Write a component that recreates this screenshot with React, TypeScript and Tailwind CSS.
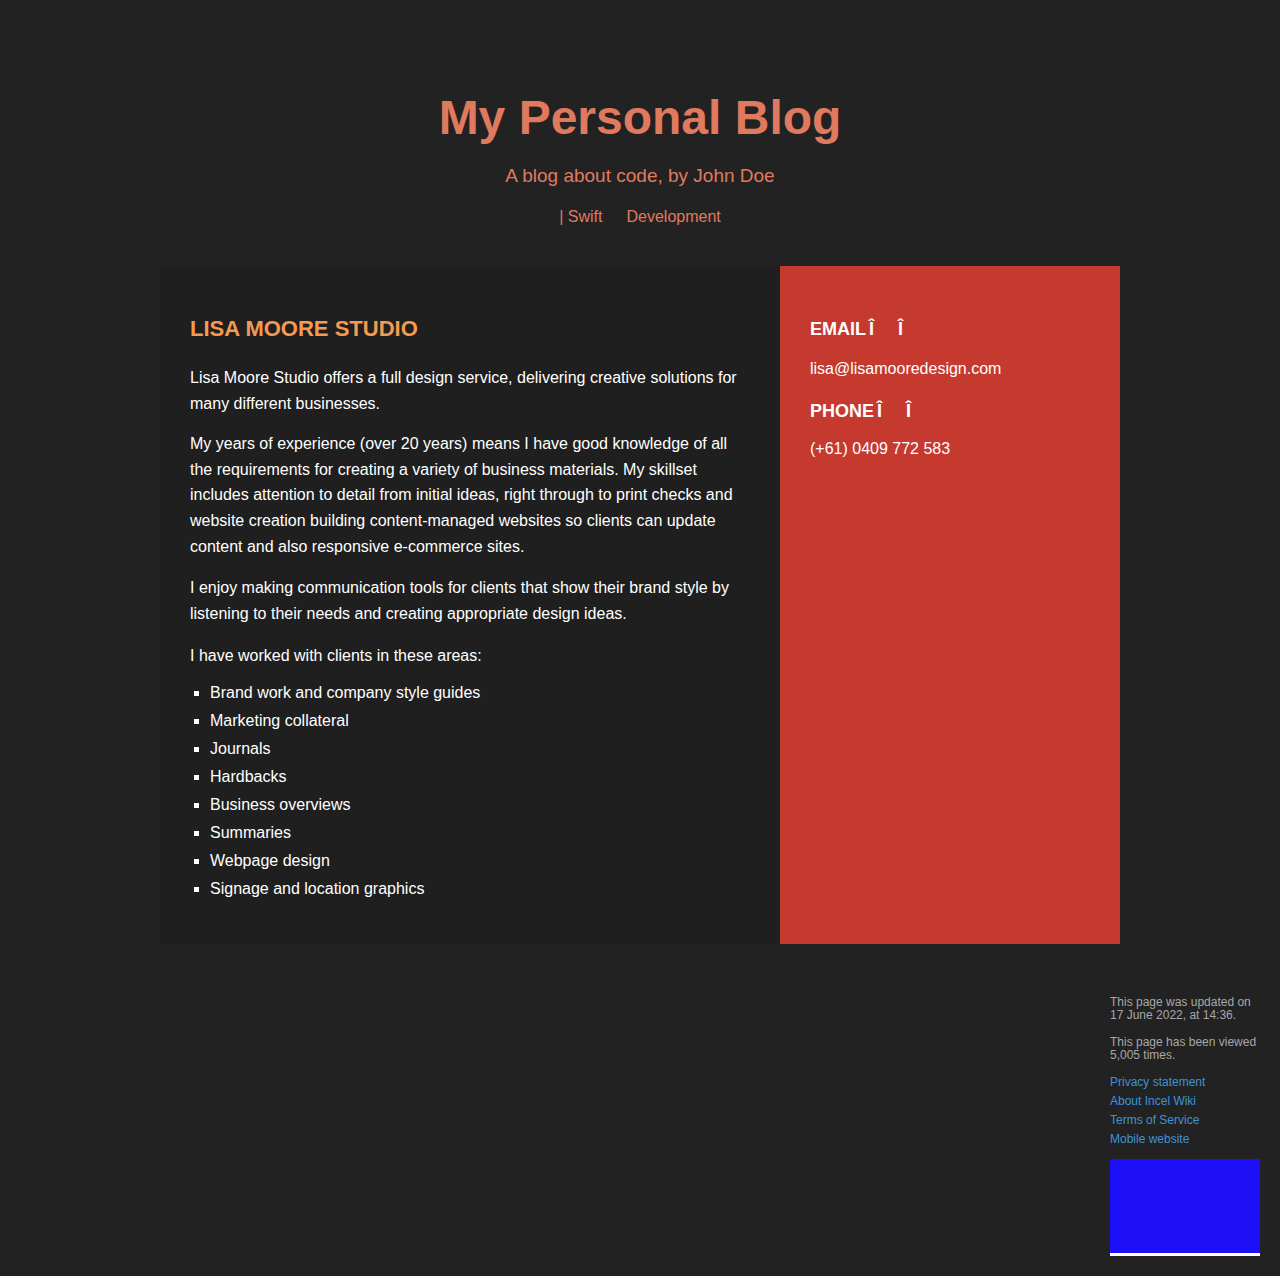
const services = [
  "Brand work and company style guides",
  "Marketing collateral",
  "Journals",
  "Hardbacks",
  "Business overviews",
  "Summaries",
  "Webpage design",
  "Signage and location graphics",
];

const footerLinks = ["Privacy statement", "About Incel Wiki", "Terms of Service", "Mobile website"];

function ContactTitle({ label }: { label: string }) {
  return (
    <h3 className="flex text-[18px] font-bold leading-[24px]">
      <span>{label}</span>
      <span className="ml-[3px]">Î</span>
      <span className="ml-[24px]">Î</span>
    </h3>
  );
}

function App() {
  return (
    <div
      className="min-h-[1276px] bg-[#222222] text-white"
      style={{ fontFamily: '"Liberation Sans", Arial, sans-serif' }}
    >
      {/* header */}
      <header className="flex flex-col items-center pt-[88px] pb-[39px] text-[#e07a5f]">
        <h1 className="text-[48px] font-bold leading-[60px]">My Personal Blog</h1>
        <p className="mt-[17px] text-[19px] leading-[22px]">A blog about code, by John Doe</p>
        <nav className="mt-[20px] flex gap-[24px] text-[16px] leading-[20px]">
          <a>| Swift</a>
          <a>Development</a>
        </nav>
      </header>

      {/* main card */}
      <main className="mx-auto flex w-[960px]">
        <section className="w-[620px] bg-[#1f1f1f] px-[30px] pt-[50px] pb-[41px] text-[16px] leading-[25.6px]">
          <h2 className="mb-[23px] text-[22px] font-bold leading-[26px] text-[#f59a4f]">LISA MOORE STUDIO</h2>
          <p className="mb-[15px]">
            Lisa Moore Studio offers a full design service, delivering creative solutions for many different businesses.
          </p>
          <p className="mb-[16px]">
            My years of experience (over 20 years) means I have good knowledge of all the requirements for creating a
            variety of business materials. My skillset includes attention to detail from initial ideas, right through to
            print checks and website creation building content-managed websites so clients can update content and also
            responsive e-commerce sites.
          </p>
          <p className="mb-[17px]">
            I enjoy making communication tools for clients that show their brand style by listening to their needs and
            creating appropriate design ideas.
          </p>
          <p className="mb-[10px]">I have worked with clients in these areas:</p>
          <ul className="list-[square] pl-[20px] leading-[28px]">
            {services.map((s) => (
              <li key={s}>{s}</li>
            ))}
          </ul>
        </section>

        <aside className="w-[340px] bg-[#c5392f] px-[30px] pt-[51px]">
          <ContactTitle label="EMAIL" />
          <p className="mt-[18px] text-[16px] leading-[20px]">lisa@lisamooredesign.com</p>
          <div className="mt-[20px]">
            <ContactTitle label="PHONE" />
          </div>
          <p className="mt-[16px] text-[16px] leading-[20px]">(+61) 0409 772 583</p>
        </aside>
      </main>

      {/* footer */}
      <footer className="flex justify-end pt-[52px] pr-[20px]">
        <div className="w-[150px] text-[12px] leading-[13px]">
          <p className="text-[#a8a8a8]">This page was updated on 17 June 2022, at 14:36.</p>
          <p className="mt-[14px] text-[#a8a8a8]">This page has been viewed 5,005 times.</p>
          <ul className="mt-[14px] flex flex-col gap-[6px] text-[#3d93d8]">
            {footerLinks.map((l) => (
              <li key={l}>
                <a>{l}</a>
              </li>
            ))}
          </ul>
          <div className="mt-[13px] h-[97px] w-[150px] border-b-[3px] border-white bg-[#1e10f6]" />
        </div>
      </footer>
    </div>
  );
}

export default App;
